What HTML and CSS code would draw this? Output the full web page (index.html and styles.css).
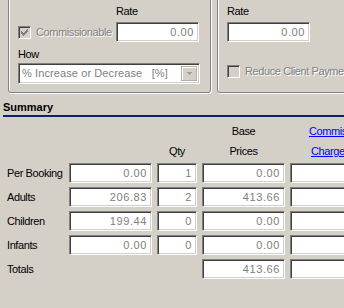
FILE: index.html
```html
<!DOCTYPE html>
<html lang="en">
<head>
    <meta charset="UTF-8">
    <title>Booking Summary</title>
    <link rel="stylesheet" href="styles.css">
</head>
<body>
    <div class="top">
        <div class="group group-left">
            <div class="line pad-rate">Rate</div>
            <div class="line check-line">
                <div class="check-wrap">
                    <span class="checkbox">
                        <svg width="7" height="7" viewBox="0 0 7 7" shape-rendering="crispEdges">
                            <rect x="0" y="2" width="1" height="3" fill="#808080"/>
                            <rect x="1" y="3" width="1" height="3" fill="#808080"/>
                            <rect x="2" y="4" width="1" height="3" fill="#808080"/>
                            <rect x="3" y="3" width="1" height="3" fill="#808080"/>
                            <rect x="4" y="2" width="1" height="3" fill="#808080"/>
                            <rect x="5" y="1" width="1" height="3" fill="#808080"/>
                            <rect x="6" y="0" width="1" height="3" fill="#808080"/>
                        </svg>
                    </span>
                    <span class="disabled">Commissionable</span>
                </div>
                <input type="text" class="field rate-field" value="0.00" readonly>
            </div>
            <div class="line how">How</div>
            <div class="combo">
                <span class="combo-text">% Increase or Decrease&nbsp;&nbsp;&nbsp;[%]</span>
                <span class="combo-btn">
                    <svg width="5" height="3" viewBox="0 0 5 3" shape-rendering="crispEdges">
                        <polygon points="0,0 5,0 2.5,3" fill="#a0a0a0"/>
                    </svg>
                </span>
            </div>
        </div>
        <div class="group group-right">
            <div class="line">Rate</div>
            <div class="line check-line">
                <input type="text" class="field rate-field" value="0.00" readonly>
            </div>
            <div class="check-wrap reduce">
                <span class="checkbox"></span>
                <span class="disabled nowrap">Reduce Client Payment</span>
            </div>
        </div>
    </div>

    <div class="summary-title">Summary</div>
    <div class="rule"></div>

    <div class="heads">
        <span></span><span></span><span></span>
        <span class="head">Base</span>
        <a href="#" class="head-link">Commission</a>
        <span></span><span></span>
        <span class="head">Qty</span>
        <span class="head">Prices</span>
        <a href="#" class="head-link second">Charges</a>
    </div>

    <div class="rows">
        <span class="row-label">Per Booking</span>
        <input type="text" class="field" value="0.00" readonly>
        <input type="text" class="field" value="1" readonly>
        <input type="text" class="field" value="0.00" readonly>
        <input type="text" class="field" value="" readonly>

        <span class="row-label">Adults</span>
        <input type="text" class="field" value="206.83" readonly>
        <input type="text" class="field" value="2" readonly>
        <input type="text" class="field" value="413.66" readonly>
        <input type="text" class="field" value="" readonly>

        <span class="row-label">Children</span>
        <input type="text" class="field" value="199.44" readonly>
        <input type="text" class="field" value="0" readonly>
        <input type="text" class="field" value="0.00" readonly>
        <input type="text" class="field" value="" readonly>

        <span class="row-label">Infants</span>
        <input type="text" class="field" value="0.00" readonly>
        <input type="text" class="field" value="0" readonly>
        <input type="text" class="field" value="0.00" readonly>
        <input type="text" class="field" value="" readonly>

        <span class="row-label">Totals</span>
        <span></span>
        <span></span>
        <input type="text" class="field" value="413.66" readonly>
        <input type="text" class="field" value="" readonly>
    </div>
</body>
</html>
```

FILE: styles.css
```css
body {
    margin: 0;
    background-color: #d4d0c8;
    font-family: "Liberation Sans", Arial, sans-serif;
    font-size: 11px;
    line-height: 13px;
    letter-spacing: -0.4px;
    color: #000;
    overflow: hidden;
    width: 344px;
    height: 308px;
}
.top {
    display: flex;
    gap: 6px;
    padding-left: 8px;
    margin-top: -10px;
    height: 103px;
}
.group {
    box-sizing: border-box;
    height: 103px;
    flex-shrink: 0;
    border: 1px solid #808080;
    border-radius: 3px;
    box-shadow: inset 1px 1px 0 #fff, 1px 1px 0 #fff;
    padding: 14px 0 0 9px;
}
.group-left {
    width: 203px;
}
.group-right {
    width: 200px;
}
.line {
    height: 13px;
}
.pad-rate {
    padding-left: 98px;
}
.check-line {
    display: flex;
    align-items: center;
    height: 20px;
    margin-top: 4px;
}
.check-wrap {
    display: flex;
    align-items: center;
    gap: 5px;
    width: 98px;
}
.reduce {
    width: auto;
    margin-top: 23px;
    white-space: nowrap;
}
.checkbox {
    box-sizing: border-box;
    width: 13px;
    height: 13px;
    flex-shrink: 0;
    border: 1px solid;
    border-color: #808080 #fff #fff #808080;
    box-shadow: inset 1px 1px 0 #404040, inset -1px -1px 0 #d4d0c8;
    background-color: #d4d0c8;
    display: flex;
    align-items: center;
    justify-content: center;
}
.disabled {
    color: #808080;
    text-shadow: 1px 1px 0 #fff;
}
.how {
    margin-top: 6px;
}
.combo {
    box-sizing: border-box;
    display: flex;
    width: 182px;
    height: 21px;
    margin-top: 2px;
    border: 1px solid;
    border-color: #808080 #fff #fff #808080;
    box-shadow: inset 1px 1px 0 #404040, inset -1px -1px 0 #d4d0c8;
    background-color: #fff;
    padding: 2px;
}
.combo-text {
    flex: 1;
    color: #808080;
    line-height: 15px;
    padding-left: 1px;
    letter-spacing: 0.1px;
    white-space: nowrap;
}
.combo-btn {
    box-sizing: border-box;
    width: 16px;
    height: 15px;
    border: 1px solid #b4b0a8;
    box-shadow: inset 1px 1px 0 #fff;
    background-color: #d4d0c8;
    display: flex;
    align-items: center;
    justify-content: center;
}
.field {
    box-sizing: border-box;
    width: 100%;
    height: 20px;
    margin: 0;
    padding: 0 4px;
    border: 1px solid;
    border-color: #808080 #fff #fff #808080;
    box-shadow: inset 1px 1px 0 #404040, inset -1px -1px 0 #d4d0c8;
    background-color: #fff;
    color: #808080;
    font-family: "Liberation Sans", Arial, sans-serif;
    font-size: 11px;
    letter-spacing: 0.6px;
    text-align: right;
    outline: none;
}
.rate-field {
    width: 83px;
}
.summary-title {
    font-weight: bold;
    letter-spacing: 0;
    margin: 8px 0 0 3px;
}
.rule {
    height: 2px;
    margin: 1px 0 0 3px;
    background-color: #0a246a;
}
.heads,
.rows {
    display: grid;
    grid-template-columns: 64px 83px 40px 83px 83px;
    column-gap: 5px;
    width: 373px;
}
.heads {
    grid-template-rows: 13px 13px;
    row-gap: 7px;
    margin-top: 8px;
}
.head {
    text-align: center;
}
.head-link {
    color: #0000ff;
    text-decoration: underline;
    padding-left: 19px;
    white-space: nowrap;
}
.head-link.second {
    padding-left: 21px;
}
.rows {
    grid-template-rows: repeat(5, 20px);
    row-gap: 4px;
    margin-top: 5px;
}
.row-label {
    padding-left: 7px;
    align-self: center;
    white-space: nowrap;
}
```
